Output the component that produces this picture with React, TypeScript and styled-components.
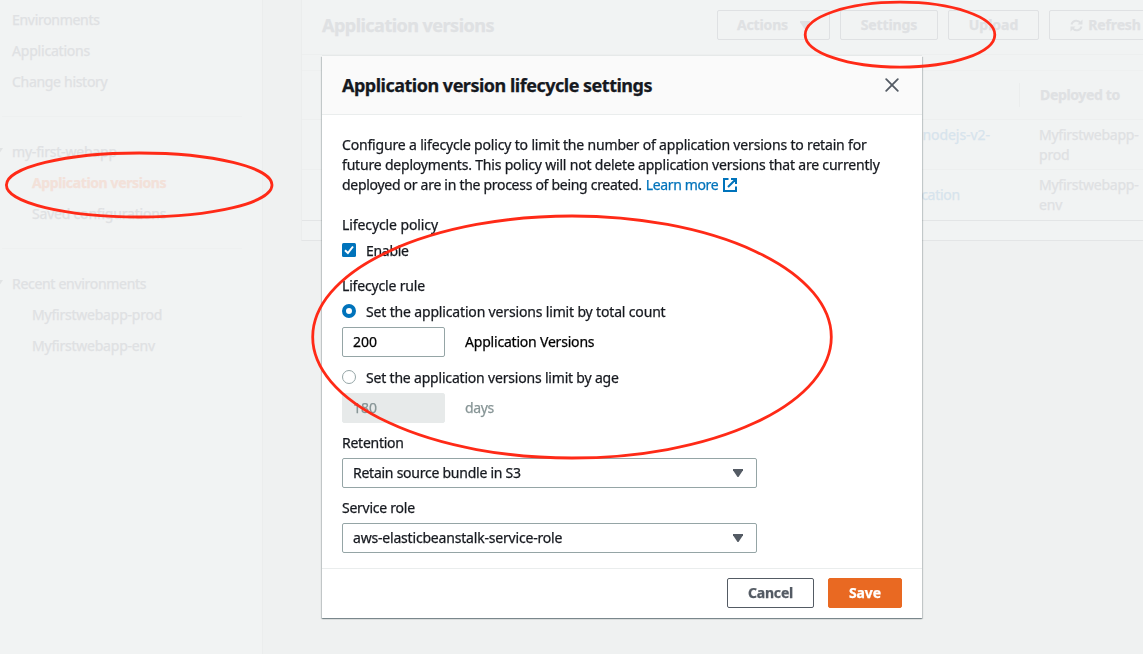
import React from "react";
import styled, { createGlobalStyle, css } from "styled-components";

const GlobalStyle = createGlobalStyle`
  * { box-sizing: border-box; }
  body {
    margin: 0;
    overflow: hidden;
    font-family: "Noto Sans", "Open Sans", sans-serif;
    font-size: 14px;
    line-height: 20px;
    color: #16191f;
    background: #eff1f1;
  }
`;

/* Letter spacing in px, so each label keeps its intended width */
const Text = styled.span<{ $ls?: number }>`
  white-space: nowrap;
  letter-spacing: ${(p) => p.$ls ?? -0.17}px;
  -webkit-text-stroke: 0.25px currentColor;
`;

const Page = styled.div`
  display: flex;
  width: 1143px;
  height: 654px;
  overflow: hidden;
  color: #dfe1e3;
`;

const Sidebar = styled.nav`
  flex: none;
  width: 263px;
  padding: 10px 20px 0 2px;
  background: #f1f3f3;
  border-right: 1px solid #ebeded;
`;

const NavGroup = styled.div`
  display: flex;
  flex-direction: column;
  gap: 11px;
  & + & {
    margin-top: 24px;
    padding-top: 25px;
    border-top: 1px solid #eef0f0;
  }
`;

const NavItem = styled.div<{ $nested?: boolean; $active?: boolean }>`
  display: flex;
  height: 20px;
  padding-left: ${(p) => (p.$nested ? 30 : 10)}px;
  ${(p) =>
    p.$active &&
    css`
      font-weight: 700;
      color: #f3e1d9;
    `}
`;

const NavCaret = styled.span`
  width: 8px;
  height: 6px;
  margin: 6px 9px 0 -17px;
  background: #e1e3e4;
  clip-path: polygon(0 0, 100% 0, 50% 100%);
`;

const Main = styled.main`
  flex: 1;
  min-width: 0;
  padding-left: 38px;
`;

const Card = styled.section`
  height: 241px;
  background: #f1f3f3;
  border-left: 1px solid #ebeded;
  border-bottom: 1px solid #e3e5e6;
`;

const CardHeader = styled.header`
  display: flex;
  justify-content: space-between;
  width: 860px;
  height: 55px;
  padding: 10px 0 0 20px;
  border-bottom: 1px solid #edefef;
`;

const CardTitle = styled.h2`
  margin: 0;
  font-size: 18px;
  line-height: 31px;
  font-weight: 700;
`;

const Actions = styled.div`
  display: flex;
  gap: 10px;
`;

const GhostButton = styled.div<{ $w: number; $gap?: number }>`
  display: flex;
  align-items: center;
  justify-content: center;
  gap: ${(p) => p.$gap ?? 0}px;
  width: ${(p) => p.$w}px;
  height: 30px;
  border: 1px solid #dfe1e3;
  border-radius: 2px;
  font-weight: 700;
`;

const Caret = styled.span<{ $color: string }>`
  width: 10px;
  height: 8px;
  background: ${(p) => p.$color};
  clip-path: polygon(0 0, 100% 0, 100% 15%, 55% 100%, 45% 100%, 0 15%);
`;

const Table = styled.div`
  margin-top: 15px;
  border-top: 1px solid #eef0f0;
  border-bottom: 1px solid #e3e5e6;
`;

const Row = styled.div<{ $h: number }>`
  display: grid;
  grid-template-columns: 718px 1fr;
  align-items: center;
  height: ${(p) => p.$h}px;
  & + & {
    border-top: 1px solid #edefef;
  }
`;

const SourceCell = styled.div<{ $end: number; $top?: boolean }>`
  align-self: ${(p) => (p.$top ? "start" : "center")};
  padding: ${(p) => (p.$top ? 5 : 0)}px ${(p) => p.$end}px 0 0;
  text-align: right;
  color: #d7e4ed;
`;

const Divider = styled.div`
  height: 24px;
  border-right: 1px solid #ebeded;
`;

const DeployCell = styled.div<{ $head?: boolean }>`
  display: flex;
  flex-direction: column;
  padding-left: ${(p) => (p.$head ? 20 : 19)}px;
  font-weight: ${(p) => (p.$head ? 700 : 400)};
`;

const Overlay = styled.div`
  position: fixed;
  top: 0;
  left: 0;
  display: flex;
  width: 1143px;
  height: 654px;
  padding: 56px 0 0 322px;
`;

const Dialog = styled.div`
  display: flex;
  flex-direction: column;
  width: 600px;
  height: 562px;
  background: #fff;
  box-shadow: 0 -1px 0 #e6e9e9, 0 1px 1px rgba(0, 28, 36, 0.3),
    1px 1px 1px rgba(0, 28, 36, 0.15), -1px 1px 1px rgba(0, 28, 36, 0.15);
`;

const DialogHeader = styled.header`
  display: flex;
  align-items: center;
  justify-content: space-between;
  height: 59px;
  padding: 0 23px 0 20px;
  background: #fafafa;
  border-bottom: 1px solid #eaeded;
`;

const DialogTitle = styled.h1`
  margin: 0;
  font-size: 18px;
  line-height: 22px;
  font-weight: 700;
`;

const DialogBody = styled.div`
  flex: 1;
  padding: 20px 20px 0;
`;

const Paragraph = styled.div`
  display: flex;
  flex-direction: column;
  margin-bottom: 20px;
`;

const Line = styled.div`
  display: flex;
  height: 20px;
`;

const Link = styled.a`
  display: flex;
  align-items: center;
  gap: 5px;
  margin-left: 4px;
  color: #0073bb;
`;

const FieldLabel = styled.div`
  height: 20px;
`;

const Choice = styled.label<{ $before: number; $after: number }>`
  display: flex;
  align-items: center;
  gap: 10px;
  height: 20px;
  margin: ${(p) => p.$before}px 0 ${(p) => p.$after}px;
  & > svg {
    margin-top: -2px;
  }
`;

const InputRow = styled.div<{ $muted?: boolean }>`
  display: flex;
  align-items: center;
  gap: 20px;
  height: 30px;
  color: ${(p) => (p.$muted ? "#879596" : "#000")};
`;

const NumberBox = styled.div<{ $muted?: boolean }>`
  display: flex;
  align-items: center;
  width: 103px;
  height: 30px;
  padding-left: 10px;
  border: 1px solid ${(p) => (p.$muted ? "#e7eaea" : "#95a5a6")};
  border-radius: 2px;
  background: ${(p) => (p.$muted ? "#e7eaea" : "#fff")};
`;

const SelectField = styled.div`
  margin-top: 10px;
`;

const SelectBox = styled.div`
  display: flex;
  align-items: center;
  justify-content: space-between;
  width: 415px;
  height: 30px;
  margin-top: 5px;
  padding: 0 13px 0 10px;
  border: 1px solid #95a5a6;
  border-radius: 2px;
`;

const DialogFooter = styled.footer`
  display: flex;
  justify-content: flex-end;
  gap: 14px;
  height: 50px;
  padding: 9px 20px 0;
  border-top: 1px solid #eaeded;
`;

const Button = styled.button<{ $primary?: boolean }>`
  width: ${(p) => (p.$primary ? 74 : 87)}px;
  height: 30px;
  padding: 0;
  font: 700 14px/20px "Noto Sans", "Open Sans", sans-serif;
  color: ${(p) => (p.$primary ? "#fff" : "#545b64")};
  background: ${(p) => (p.$primary ? "#e96922" : "#fff")};
  border: 1px solid ${(p) => (p.$primary ? "#e96922" : "#545b64")};
  border-radius: 2px;
`;

const Marks = styled.svg`
  position: fixed;
  top: 0;
  left: 0;
  pointer-events: none;
`;

const RefreshIcon = () => (
  <svg width="13" height="13" viewBox="0 0 13 13" fill="none" stroke="#dfe1e3" strokeWidth="2">
    <path d="M1.500 5.500A5 5 0 0 1 10.500 4M11.500 7.500A5 5 0 0 1 2.500 9" />
    <path d="M12.500 0.500v5h-5zM0.500 12.500v-5h5z" fill="#dfe1e3" stroke="none" />
  </svg>
);

const CloseIcon = () => (
  <svg width="14" height="14" viewBox="0 0 14 14" stroke="#545b64" strokeWidth="1.8" strokeLinecap="round">
    <path d="M1.2 1.2 12.8 12.8M12.8 1.2 1.2 12.8" />
  </svg>
);

const ExternalIcon = () => (
  <svg width="14" height="14" viewBox="0 0 14 14" fill="none" stroke="#0073bb" strokeWidth="2">
    <path d="M5.5 1H1v12h12V8.5M8 1h5v5M13 1 5 9" />
  </svg>
);

const CheckIcon = () => (
  <svg width="14" height="14" viewBox="0 0 14 14">
    <rect width="14" height="14" rx="1.5" fill="#0073bb" />
    <path d="M3 7.3 5.9 10 11 3.5" fill="none" stroke="#fff" strokeWidth="2" />
  </svg>
);

const RadioIcon = ({ on }: { on?: boolean }) => (
  <svg width="14" height="14" viewBox="0 0 14 14">
    {on ? (
      <circle cx="7" cy="7" r="5" fill="#fff" stroke="#0073bb" strokeWidth="4" />
    ) : (
      <circle cx="7" cy="7" r="6.5" fill="#fff" stroke="#95a5a6" />
    )}
  </svg>
);

export default function App() {
  return (
    <>
      <GlobalStyle />
      <Page>
        <Sidebar>
          <NavGroup>
            <NavItem><Text $ls={-0.3}>Environments</Text></NavItem>
            <NavItem><Text $ls={-0.2}>Applications</Text></NavItem>
            <NavItem><Text $ls={-0.3}>Change history</Text></NavItem>
          </NavGroup>
          <NavGroup>
            <NavItem><NavCaret /><Text $ls={-0.2}>my-first-webapp</Text></NavItem>
            <NavItem $nested $active><Text $ls={-0.38}>Application versions</Text></NavItem>
            <NavItem $nested><Text $ls={-0.2}>Saved configurations</Text></NavItem>
          </NavGroup>
          <NavGroup>
            <NavItem><NavCaret /><Text $ls={-0.3}>Recent environments</Text></NavItem>
            <NavItem $nested><Text $ls={-0.22}>Myfirstwebapp-prod</Text></NavItem>
            <NavItem $nested><Text $ls={-0.22}>Myfirstwebapp-env</Text></NavItem>
          </NavGroup>
        </Sidebar>
        <Main>
          <Card>
            <CardHeader>
              <CardTitle><Text $ls={-0.52}>Application versions</Text></CardTitle>
              <Actions>
                <GhostButton $w={113} $gap={12}>
                  <Text $ls={-0.15}>Actions</Text>
                  <Caret $color="#dfe1e3" />
                </GhostButton>
                <GhostButton $w={98}><Text $ls={-0.1}>Settings</Text></GhostButton>
                <GhostButton $w={91}><Text $ls={0}>Upload</Text></GhostButton>
                <GhostButton $w={113} $gap={5}><RefreshIcon /><Text $ls={-0.15}>Refresh</Text></GhostButton>
              </Actions>
            </CardHeader>
            <Table>
              <Row $h={48}>
                <Divider />
                <DeployCell $head><Text $ls={-0.35}>Deployed to</Text></DeployCell>
              </Row>
              <Row $h={50}>
                <SourceCell $end={30} $top><Text $ls={-0.05}>nodejs-v2-</Text></SourceCell>
                <DeployCell><Text $ls={-0.25}>Myfirstwebapp-</Text><Text>prod</Text></DeployCell>
              </Row>
              <Row $h={51}>
                <SourceCell $end={60}><Text $ls={-0.25}>cation</Text></SourceCell>
                <DeployCell><Text $ls={-0.25}>Myfirstwebapp-</Text><Text>env</Text></DeployCell>
              </Row>
            </Table>
          </Card>
        </Main>
      </Page>

      <Overlay>
        <Dialog role="dialog">
          <DialogHeader>
            <DialogTitle><Text $ls={-0.5}>Application version lifecycle settings</Text></DialogTitle>
            <CloseIcon />
          </DialogHeader>
          <DialogBody>
            <Paragraph>
              <Line><Text>Configure a lifecycle policy to limit the number of application versions to retain for</Text></Line>
              <Line><Text $ls={-0.19}>future deployments. This policy will not delete application versions that are currently</Text></Line>
              <Line>
                <Text $ls={-0.29}>deployed or are in the process of being created.</Text>
                <Link><Text $ls={-0.35}>Learn more</Text><ExternalIcon /></Link>
              </Line>
            </Paragraph>
            <FieldLabel><Text $ls={-0.1}>Lifecycle policy</Text></FieldLabel>
            <Choice $before={6} $after={15}><CheckIcon /><Text $ls={-0.3}>Enable</Text></Choice>
            <FieldLabel><Text>Lifecycle rule</Text></FieldLabel>
            <Choice $before={6} $after={5}><RadioIcon on /><Text $ls={-0.16}>Set the application versions limit by total count</Text></Choice>
            <InputRow>
              <NumberBox><Text $ls={0}>200</Text></NumberBox>
              <Text $ls={-0.2}>Application Versions</Text>
            </InputRow>
            <Choice $before={11} $after={5}><RadioIcon /><Text $ls={-0.19}>Set the application versions limit by age</Text></Choice>
            <InputRow $muted>
              <NumberBox $muted><Text $ls={0}>180</Text></NumberBox>
              <Text $ls={-0.4}>days</Text>
            </InputRow>
            <SelectField>
              <FieldLabel><Text $ls={-0.25}>Retention</Text></FieldLabel>
              <SelectBox><Text $ls={-0.25}>Retain source bundle in S3</Text><Caret $color="#545b64" /></SelectBox>
            </SelectField>
            <SelectField>
              <FieldLabel><Text $ls={-0.25}>Service role</Text></FieldLabel>
              <SelectBox><Text $ls={-0.19}>aws-elasticbeanstalk-service-role</Text><Caret $color="#545b64" /></SelectBox>
            </SelectField>
          </DialogBody>
          <DialogFooter>
            <Button><Text $ls={-0.2}>Cancel</Text></Button>
            <Button $primary><Text $ls={-0.1}>Save</Text></Button>
          </DialogFooter>
        </Dialog>
      </Overlay>

      <Marks width="1143" height="654" viewBox="0 0 1143 654" fill="none" stroke="#ff2a17" strokeWidth="2.8">
        <ellipse cx="139.2" cy="185" rx="132.8" ry="32" />
        <ellipse cx="900" cy="34.7" rx="94.8" ry="32.5" />
        <ellipse cx="572" cy="337" rx="259.3" ry="121" />
      </Marks>
    </>
  );
}
